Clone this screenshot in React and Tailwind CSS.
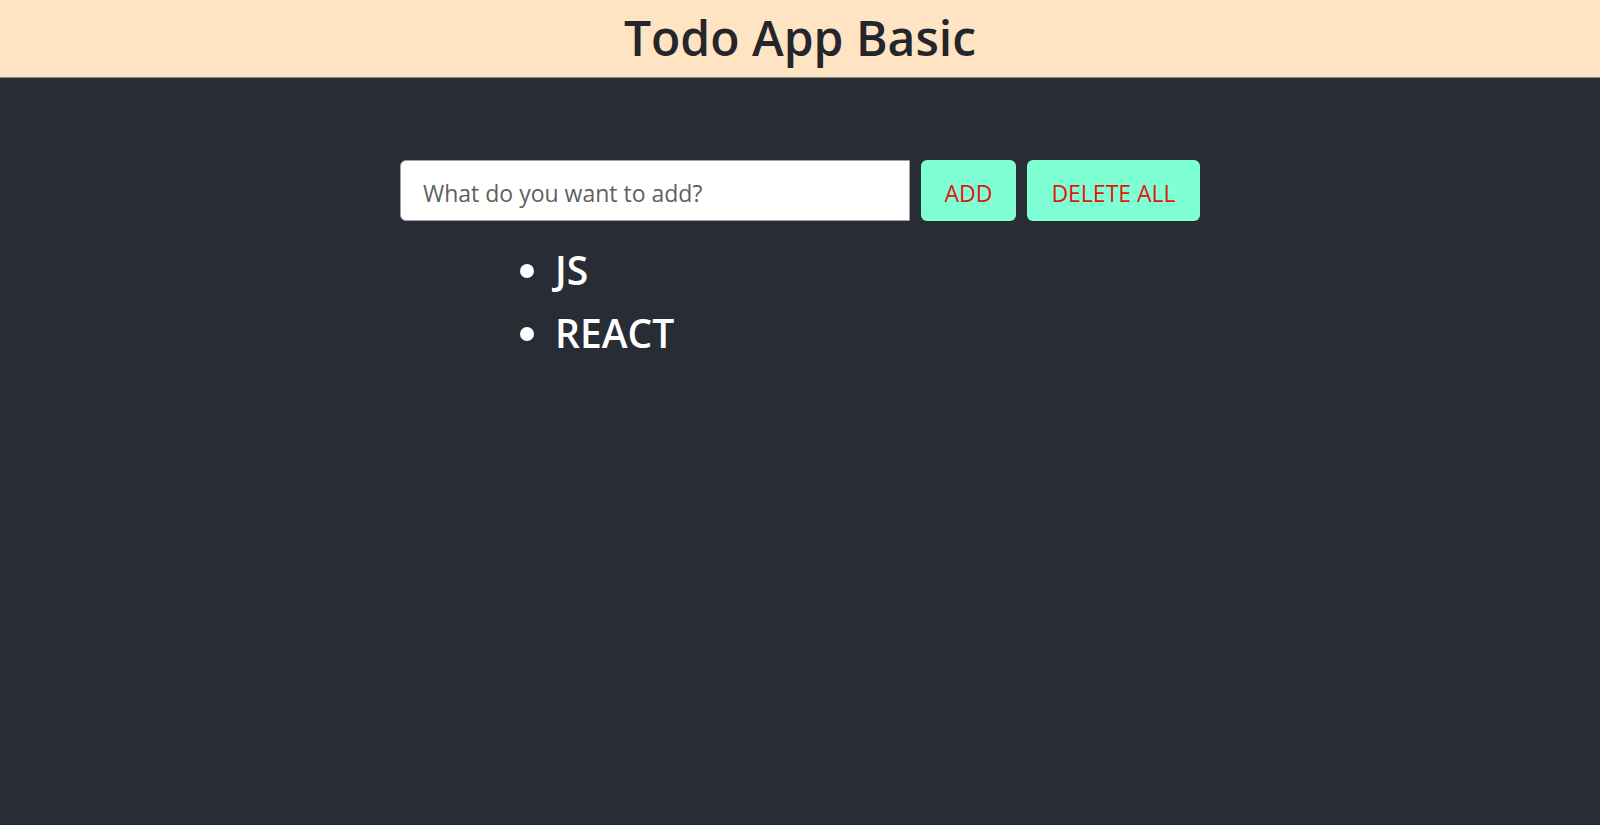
import { useState } from 'react'

export default function App() {
  const [text, setText] = useState('')
  const [todos, setTodos] = useState(['JS', 'REACT'])

  const add = () => {
    if (!text.trim()) return
    setTodos(prev => [...prev, text.trim()])
    setText('')
  }

  return (
    <div className="min-h-screen bg-[#282c34]" style={{ fontFamily: '"Open Sans", "Noto Sans", sans-serif' }}>
      {/* Header */}
      <header className="h-[78px] bg-[#ffe4c4] border-b border-[#8a8580] flex items-center justify-center">
        <h1 className="text-[48px] font-semibold text-[#24262b] leading-none -mt-[2px]">Todo App Basic</h1>
      </header>

      {/* Form */}
      <div className="w-[800px] mx-auto pt-[82px]">
        <div className="flex gap-[11px] h-[61px]">
          <input
            value={text}
            onChange={e => setText(e.target.value)}
            placeholder="What do you want to add?"
            className="w-[510px] h-full bg-white rounded-l-[6px] border border-[#9aa0a6] px-[22px] pt-[5px] text-[23px] text-[#333] placeholder:text-[#5f5f5f] outline-none"
          />
          <button onClick={add} className="w-[95px] h-full rounded-[6px] bg-[#7fffd4] text-[#e0190b] text-[23px] pt-[5px]">
            ADD
          </button>
          <button onClick={() => setTodos([])} className="w-[173px] h-full rounded-[6px] bg-[#7fffd4] text-[#e0190b] text-[23px] pt-[5px]">
            DELETE ALL
          </button>
        </div>

        {/* List */}
        <ul className="list-disc pl-[155px] mt-[17px] text-white text-[39px] font-semibold leading-[63px]">
          {todos.map((t, i) => (
            <li key={i}>{t}</li>
          ))}
        </ul>
      </div>
    </div>
  )
}
